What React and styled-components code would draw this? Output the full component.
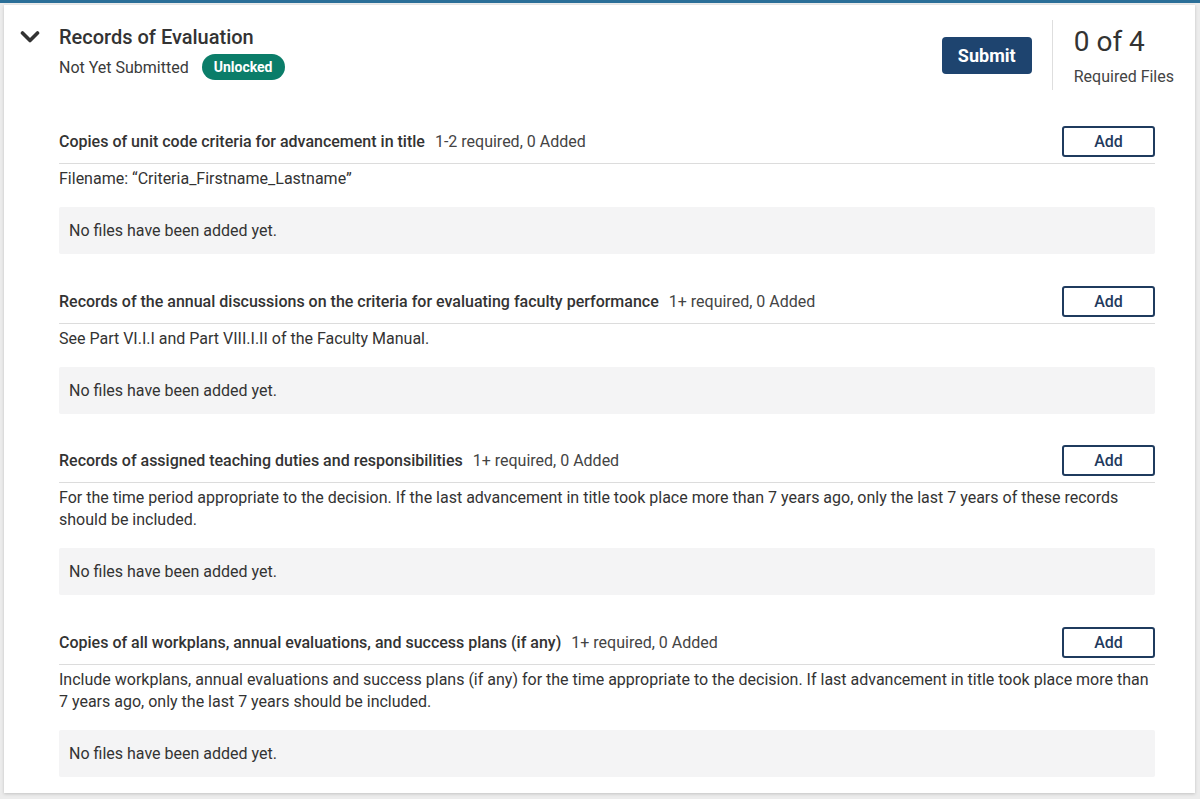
import React from 'react';
import styled, { createGlobalStyle } from 'styled-components';

const Global = createGlobalStyle`
  html, body { margin: 0; padding: 0; background: #ececec; }
  body { font-family: Roboto, "Noto Sans", "Liberation Sans", sans-serif; color: #333; }
  * { box-sizing: border-box; }
`;

const TopBar = styled.div`
  height: 3px;
  background: #2b6f98;
`;

const Page = styled.div`
  padding: 2px 5px 6px 4px;
`;

const Card = styled.section`
  background: #fff;
  box-shadow: 0 1px 3px rgba(0, 0, 0, 0.18);
  padding: 15px 21px 16px 16px;
`;

const Header = styled.header`
  display: flex;
  align-items: flex-start;
`;

const Toggle = styled.button`
  width: 39px;
  padding: 10px 0 0 0;
  border: 0;
  background: none;
  display: flex;
  cursor: pointer;
`;

const TitleBlock = styled.div`
  flex: 1;
  padding-top: 5px;
`;

const Title = styled.h2`
  margin: 0;
  font-size: 20px;
  line-height: 24px;
  font-weight: 500;
  color: #333;
`;

const StatusRow = styled.div`
  display: flex;
  align-items: center;
  margin-top: 5px;
  font-size: 16px;
  color: #3a3a3a;
`;

const Badge = styled.span`
  margin-left: 13px;
  height: 26px;
  padding: 0 12px;
  border-radius: 13px;
  background: #0b7d69;
  color: #fff;
  font-size: 14px;
  font-weight: 700;
  display: inline-flex;
  align-items: center;
`;

const SubmitButton = styled.button`
  margin: 17px 20px 0 0;
  width: 90px;
  height: 37px;
  border: 0;
  border-radius: 4px;
  background: #1e446f;
  color: #fff;
  font-family: inherit;
  font-size: 18px;
  font-weight: 700;
  cursor: pointer;
`;

const Stats = styled.div`
  height: 70px;
  border-left: 1px solid #dedede;
  padding: 7px 0 0 21px;
`;

const Count = styled.div`
  font-size: 28px;
  line-height: 30px;
  color: #333;
`;

const CountLabel = styled.div`
  margin-top: 10px;
  font-size: 16px;
  line-height: 20px;
  color: #444;
`;

const Sections = styled.div`
  margin: 36px 19px 0 39px;
`;

const Section = styled.div`
  & + & { margin-top: 31.5px; }
`;

const ReqHeader = styled.div`
  display: flex;
  align-items: center;
  padding-bottom: 6px;
  border-bottom: 1px solid #dcdcdc;
`;

const ReqTitle = styled.span`
  font-size: 16px;
  font-weight: 500;
  color: #333;
`;

const ReqMeta = styled.span`
  flex: 1;
  margin-left: 10px;
  font-size: 16px;
  color: #444;
`;

const AddButton = styled.button`
  width: 93px;
  height: 31px;
  border: 2px solid #1f3b5e;
  border-radius: 3px;
  background: #fff;
  color: #1f3b5e;
  font-family: inherit;
  font-size: 16px;
  font-weight: 500;
  cursor: pointer;
`;

const Desc = styled.p`
  margin: 4px 0 0;
  font-size: 16px;
  line-height: 22px;
  color: #333;
`;

const Empty = styled.div`
  margin-top: 17px;
  height: 47px;
  padding: 0 10px;
  display: flex;
  align-items: center;
  background: #f4f4f5;
  border-radius: 2px;
  font-size: 16px;
  color: #333;
`;

const Chevron = () => (
  <svg width="20" height="14" viewBox="0 0 20 14">
    <polyline points="2.5,3 10,10.5 17.5,3" fill="none" stroke="#333" strokeWidth="3.6" strokeLinecap="round" strokeLinejoin="round" />
  </svg>
);

const requirements = [
  {
    title: 'Copies of unit code criteria for advancement in title',
    meta: '1-2 required, 0 Added',
    desc: 'Filename: \u201cCriteria_Firstname_Lastname\u201d',
  },
  {
    title: 'Records of the annual discussions on the criteria for evaluating faculty performance',
    meta: '1+ required, 0 Added',
    desc: 'See Part VI.I.I and Part VIII.I.II of the Faculty Manual.',
  },
  {
    title: 'Records of assigned teaching duties and responsibilities',
    meta: '1+ required, 0 Added',
    desc: 'For the time period appropriate to the decision. If the last advancement in title took place more than 7 years ago, only the last 7 years of these records should be included.',
  },
  {
    title: 'Copies of all workplans, annual evaluations, and success plans (if any)',
    meta: '1+ required, 0 Added',
    desc: 'Include workplans, annual evaluations and success plans (if any) for the time appropriate to the decision. If last advancement in title took place more than 7 years ago, only the last 7 years should be included.',
  },
];

export default function App() {
  return (
    <>
      <Global />
      <TopBar />
      <Page>
        <Card>
          <Header>
            <Toggle aria-label="Collapse">
              <Chevron />
            </Toggle>
            <TitleBlock>
              <Title>Records of Evaluation</Title>
              <StatusRow>
                Not Yet Submitted
                <Badge>Unlocked</Badge>
              </StatusRow>
            </TitleBlock>
            <SubmitButton>Submit</SubmitButton>
            <Stats>
              <Count>0 of 4</Count>
              <CountLabel>Required Files</CountLabel>
            </Stats>
          </Header>
          <Sections>
            {requirements.map((r) => (
              <Section key={r.title}>
                <ReqHeader>
                  <ReqTitle>{r.title}</ReqTitle>
                  <ReqMeta>{r.meta}</ReqMeta>
                  <AddButton>Add</AddButton>
                </ReqHeader>
                <Desc>{r.desc}</Desc>
                <Empty>No files have been added yet.</Empty>
              </Section>
            ))}
          </Sections>
        </Card>
      </Page>
    </>
  );
}
